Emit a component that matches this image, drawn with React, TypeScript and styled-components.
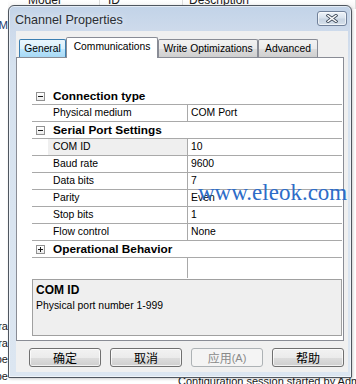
import React from "react";
import styled, { createGlobalStyle, css } from "styled-components";

const GlobalStyle = createGlobalStyle`
  html, body { margin: 0; padding: 0; background: #ffffff; }
  body {
    width: 356px; height: 384px; overflow: hidden;
    font-family: "Liberation Sans", Arial, sans-serif;
  }
  #root { width: 356px; height: 384px; }
`;

const Desktop = styled.div`
  position: relative;
  width: 356px;
  height: 384px;
  overflow: hidden;
  background: #ffffff;
`;

/* ---------- application behind the dialog ---------- */
const AppBehind = styled.div`
  display: grid;
  grid-template-columns: 8px 1fr;
  grid-template-rows: 9px 1fr 9px;
  width: 356px;
  height: 384px;
  font-size: 12px;
  color: #1a1a1a;
`;

const LeftStrip = styled.div`
  grid-row: 1 / -1;
  grid-column: 1;
  display: flex;
  flex-direction: column;
  overflow: hidden;
  padding-top: 17px;
`;

const Fragment = styled.div<{ $gap?: number; $color?: string }>`
  display: flex;
  justify-content: flex-end;
  height: 17px;
  line-height: 17px;
  white-space: nowrap;
  overflow: hidden;
  margin-top: ${(p) => p.$gap ?? 0}px;
  color: ${(p) => p.$color ?? "#1a1a1a"};
  font-size: 11px;
`;

const ListHeader = styled.div`
  grid-column: 2;
  grid-row: 1;
  display: flex;
  overflow: hidden;
  background: linear-gradient(#ffffff, #f3f3f3);
`;

const HeaderCell = styled.div<{ $w?: number; $pad: number }>`
  ${(p) => (p.$w ? css`width: ${p.$w}px; flex: none;` : css`flex: 1;`)}
  box-sizing: border-box;
  padding-left: ${(p) => p.$pad}px;
  border-right: 1px solid #dcdcdc;
  line-height: 14px;
  margin-top: -7px;
  font-size: 12px;
  white-space: nowrap;
`;

const StatusLine = styled.div`
  grid-column: 2;
  grid-row: 3;
  padding-left: 170px;
  font-size: 11px;
  line-height: 13px;
  white-space: nowrap;
  overflow: hidden;
`;

/* ---------- dialog ---------- */
const Dialog = styled.div`
  position: absolute;
  left: 8px;
  top: 5px;
  width: 344px;
  height: 373px;
  box-sizing: border-box;
  border: 1px solid #4f565f;
  border-radius: 6px 6px 1px 1px;
  background: linear-gradient(180deg, #c2d3e8 0px, #cddaeb 24px, #d6e2ef 60px, #dce6f1 100%);
  box-shadow: inset 0 0 0 1px rgba(255, 255, 255, 0.55), 1px 1px 3px rgba(0, 0, 0, 0.2);
  display: flex;
  flex-direction: column;
`;

const TitleBar = styled.div`
  height: 25px;
  flex: none;
  display: flex;
  align-items: flex-start;
  padding: 0 4px 0 6px;
`;

const Title = styled.div`
  margin-top: 6px;
  line-height: 16px;
  font-size: 12.6px;
  color: #2a2e33;
  text-shadow: 0 0 6px rgba(255, 255, 255, 0.9);
  white-space: nowrap;
`;

const CloseButton = styled.div`
  margin-left: auto;
  margin-top: 5px;
  width: 30px;
  height: 15px;
  box-sizing: border-box;
  border: 1px solid #71819a;
  border-radius: 3px;
  background: linear-gradient(180deg, #eef3f9 0%, #d9e3ee 45%, #c8d4e2 55%, #d7e1ec 100%);
  box-shadow: inset 0 0 0 1px rgba(255, 255, 255, 0.6);
  display: flex;
  align-items: center;
  justify-content: center;
`;

const FrameBody = styled.div`
  flex: 1;
  display: flex;
  padding: 0 4px 5px 7px;
`;

const Client = styled.div`
  flex: 1;
  background: #f0f0f0;
  display: flex;
  flex-direction: column;
  padding: 6px 4px 5px 0;
`;

const TabStrip = styled.div`
  height: 20px;
  flex: none;
  display: flex;
  align-items: flex-end;
  padding-left: 3px;
  position: relative;
  z-index: 1;
`;

const Tab = styled.div<{ $w: number; $state: "normal" | "hot" | "selected" }>`
  width: ${(p) => p.$w}px;
  box-sizing: border-box;
  border: 1px solid #898c95;
  border-bottom: none;
  border-radius: 2px 2px 0 0;
  font-size: 10.3px;
  color: #000;
  text-align: center;
  white-space: nowrap;
  ${(p) =>
    p.$state === "selected"
      ? css`
          height: 21px;
          margin-bottom: -1px;
          background: #ffffff;
          line-height: 18px;
        `
      : p.$state === "hot"
      ? css`
          height: 18px;
          line-height: 18px;
          border-color: #3c7fb1;
          background: linear-gradient(180deg, #eaf6fd 0%, #d9f0fc 50%, #bee6fd 51%, #a7d9f5 100%);
        `
      : css`
          height: 18px;
          line-height: 18px;
          background: linear-gradient(180deg, #f2f2f2 0%, #ebebeb 50%, #dddddd 51%, #cfcfcf 100%);
        `}
`;

const Panel = styled.div`
  flex: 1;
  box-sizing: border-box;
  border: 1px solid #898c95;
  background: #ffffff;
  display: flex;
  flex-direction: column;
  padding: 30px 1px 4px 15px;
`;

const Grid = styled.div`
  display: flex;
  flex-direction: column;
`;

const lineColor = "#a9a9a9";

const PropRow = styled.div`
  display: grid;
  grid-template-columns: 16px 139px 1fr;
  height: 17px;
  box-sizing: border-box;
  border-bottom: 1px solid ${lineColor};
  font-size: 10.4px;
  line-height: 16px;
  color: #000;
`;

const NameCell = styled.div<{ $selected?: boolean }>`
  padding-left: 5px;
  white-space: nowrap;
  background: ${(p) => (p.$selected ? "#efefef" : "transparent")};
`;

const ValueCell = styled.div`
  border-left: 1px solid ${lineColor};
  padding-left: 3px;
  white-space: nowrap;
`;

const CategoryRow = styled.div`
  display: flex;
  align-items: center;
  height: 17px;
  box-sizing: border-box;
  border-bottom: 1px solid ${lineColor};
`;

const Expander = styled.div`
  margin-left: 4px;
  width: 9px;
  height: 9px;
  box-sizing: border-box;
  border: 1px solid #919191;
  background: linear-gradient(#ffffff, #ececec);
  display: flex;
  align-items: center;
  justify-content: center;
`;

const CategoryLabel = styled.div`
  margin-left: 8px;
  font-weight: bold;
  font-size: 11.8px;
  line-height: 16px;
  color: #000;
  white-space: nowrap;
`;

const FillerRow = styled.div`
  display: grid;
  grid-template-columns: 16px 139px 1fr;
  height: 20px;
  margin-bottom: 1px;
`;

const HelpPane = styled.div`
  height: 57px;
  box-sizing: border-box;
  border: 1px solid #a0a0a0;
  background: #efefef;
  padding: 3px 3px 0 3px;
  color: #000;
`;

const HelpTitle = styled.div`
  font-weight: bold;
  font-size: 12px;
  line-height: 14px;
`;

const HelpText = styled.div`
  margin-top: 2px;
  font-size: 10.4px;
  line-height: 14px;
`;

const ButtonRow = styled.div`
  display: flex;
  gap: 9px;
  padding-left: 13px;
  margin-top: 7px;
  height: 19px;
  flex: none;
`;

const Button = styled.div<{ $disabled?: boolean }>`
  width: 72px;
  height: 19px;
  box-sizing: border-box;
  border-radius: 3px;
  display: flex;
  align-items: center;
  justify-content: center;
  font-family: "Noto Sans CJK SC", "Liberation Sans", sans-serif;
  font-size: 12px;
  ${(p) =>
    p.$disabled
      ? css`
          border: 1px solid #adb2b5;
          background: #f4f4f4;
          color: #8a8a8a;
        `
      : css`
          border: 1px solid #707070;
          background: linear-gradient(180deg, #f2f2f2 0%, #ebebeb 50%, #dddddd 51%, #cfcfcf 100%);
          box-shadow: inset 0 0 0 1px rgba(255, 255, 255, 0.7);
          color: #000;
        `}
`;

const ButtonLatin = styled.span`
  font-family: "Liberation Sans", Arial, sans-serif;
  font-size: 11px;
`;

const Watermark = styled.div`
  position: absolute;
  left: 198px;
  top: 181px;
  font-family: "Liberation Serif", "Times New Roman", serif;
  font-size: 23px;
  line-height: 23px;
  color: #2d6cc8;
  white-space: nowrap;
  pointer-events: none;
`;

/* ---------- small drawings ---------- */
const CloseGlyph = () => (
  <svg width="12" height="9" viewBox="0 0 12 9">
    <path d="M2 1.5 L10 7.5 M10 1.5 L2 7.5" stroke="#3e4a5a" strokeWidth="3.2" strokeLinecap="square" />
    <path d="M2 1.5 L10 7.5 M10 1.5 L2 7.5" stroke="#ffffff" strokeWidth="1.5" strokeLinecap="square" />
  </svg>
);

const ExpandGlyph = ({ open }: { open: boolean }) => (
  <svg width="7" height="7" viewBox="0 0 7 7">
    <rect x="1" y="3" width="5" height="1" fill="#1a1a1a" />
    {!open && <rect x="3" y="1" width="1" height="5" fill="#1a1a1a" />}
  </svg>
);

type Item =
  | { kind: "cat"; label: string; open: boolean }
  | { kind: "prop"; name: string; value: string; selected?: boolean };

const items: Item[] = [
  { kind: "cat", label: "Connection type", open: true },
  { kind: "prop", name: "Physical medium", value: "COM Port" },
  { kind: "cat", label: "Serial Port Settings", open: true },
  { kind: "prop", name: "COM ID", value: "10", selected: true },
  { kind: "prop", name: "Baud rate", value: "9600" },
  { kind: "prop", name: "Data bits", value: "7" },
  { kind: "prop", name: "Parity", value: "Even" },
  { kind: "prop", name: "Stop bits", value: "1" },
  { kind: "prop", name: "Flow control", value: "None" },
  { kind: "cat", label: "Operational Behavior", open: false },
];

const tabs: { label: string; w: number; state: "normal" | "hot" | "selected" }[] = [
  { label: "General", w: 47, state: "hot" },
  { label: "Communications", w: 92, state: "selected" },
  { label: "Write Optimizations", w: 100, state: "normal" },
  { label: "Advanced", w: 60, state: "normal" },
];

export default function App() {
  return (
    <Desktop>
      <GlobalStyle />
      <AppBehind>
        <LeftStrip>
          <Fragment $color="#24406e">4M</Fragment>
          <Fragment $gap={285}>Para</Fragment>
          <Fragment>Para</Fragment>
          <Fragment>Type</Fragment>
          <Fragment>Type</Fragment>
        </LeftStrip>
        <ListHeader>
          <HeaderCell $w={92} $pad={20}>Model</HeaderCell>
          <HeaderCell $w={83} $pad={8}>ID</HeaderCell>
          <HeaderCell $pad={6}>Description</HeaderCell>
        </ListHeader>
        <StatusLine>Configuration session started by Administrator</StatusLine>
      </AppBehind>

      <Dialog>
        <TitleBar>
          <Title>Channel Properties</Title>
          <CloseButton>
            <CloseGlyph />
          </CloseButton>
        </TitleBar>
        <FrameBody>
          <Client>
            <TabStrip>
              {tabs.map((t) => (
                <Tab key={t.label} $w={t.w} $state={t.state}>
                  {t.label}
                </Tab>
              ))}
            </TabStrip>
            <Panel>
              <Grid>
                {items.map((it, i) =>
                  it.kind === "cat" ? (
                    <CategoryRow key={i}>
                      <Expander>
                        <ExpandGlyph open={it.open} />
                      </Expander>
                      <CategoryLabel>{it.label}</CategoryLabel>
                    </CategoryRow>
                  ) : (
                    <PropRow key={i}>
                      <div />
                      <NameCell $selected={it.selected}>{it.name}</NameCell>
                      <ValueCell>{it.value}</ValueCell>
                    </PropRow>
                  )
                )}
                <FillerRow>
                  <div />
                  <div />
                  <ValueCell />
                </FillerRow>
              </Grid>
              <HelpPane>
                <HelpTitle>COM ID</HelpTitle>
                <HelpText>Physical port number 1-999</HelpText>
              </HelpPane>
            </Panel>
            <ButtonRow>
              <Button>确定</Button>
              <Button>取消</Button>
              <Button $disabled>
                应用<ButtonLatin>(A)</ButtonLatin>
              </Button>
              <Button>帮助</Button>
            </ButtonRow>
          </Client>
        </FrameBody>
      </Dialog>

      <Watermark>www.eleok.com</Watermark>
    </Desktop>
  );
}
